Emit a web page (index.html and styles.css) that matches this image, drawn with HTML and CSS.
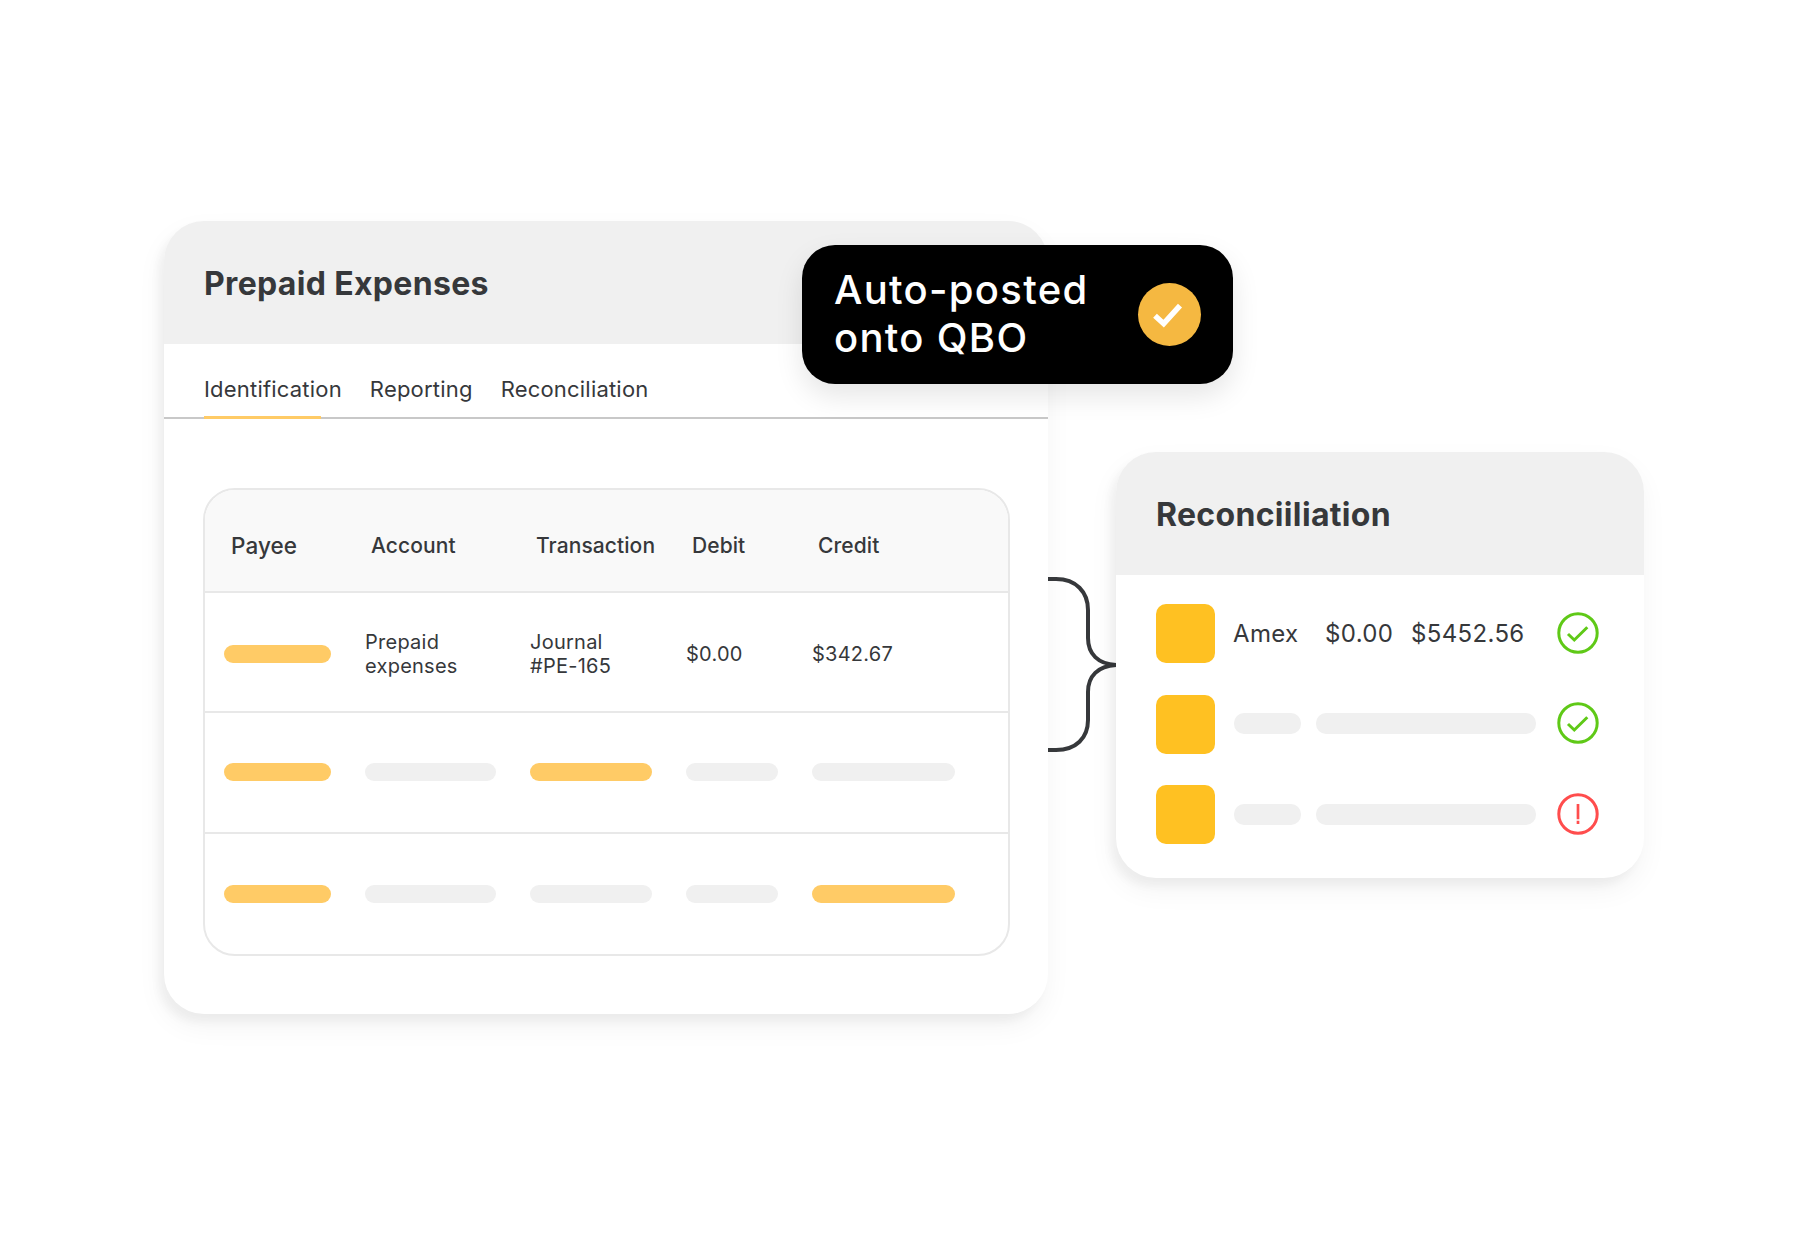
FILE: index.html
```html
<!DOCTYPE html>
<html>

    <head>
        <link rel="stylesheet" href="styles.css">
    </head>

    <body>
        <div class="canvas">
            <div class="card main-card">
                <div class="card-head"><h2>Prepaid Expenses</h2></div>
                <div class="tabs">
                    <span class="tab active">Identification</span>
                    <span class="tab">Reporting</span>
                    <span class="tab">Reconciliation</span>
                </div>
                <div class="table-wrap">
                    <div class="table">
                        <div class="row head-row">
                            <span class="first">Payee</span>
                            <span>Account</span>
                            <span>Transaction</span>
                            <span>Debit</span>
                            <span>Credit</span>
                        </div>
                        <div class="row row-one">
                            <i class="bar w-payee orange"></i>
                            <span>Prepaid<br>expenses</span>
                            <span>Journal<br>#PE-165</span>
                            <span>$0.00</span>
                            <span>$342.67</span>
                        </div>
                        <div class="row row-two">
                            <i class="bar w-payee orange"></i>
                            <i class="bar w-account"></i>
                            <i class="bar w-trans orange"></i>
                            <i class="bar w-debit"></i>
                            <i class="bar w-credit"></i>
                        </div>
                        <div class="row row-three">
                            <i class="bar w-payee orange"></i>
                            <i class="bar w-account"></i>
                            <i class="bar w-trans"></i>
                            <i class="bar w-debit"></i>
                            <i class="bar w-credit orange"></i>
                        </div>
                    </div>
                </div>
            </div>

            <div class="badge">
                <div class="badge-text">Auto-posted<br>onto QBO</div>
                <div class="badge-check">
                    <svg width="63" height="63" viewBox="0 0 63 63"><path d="M17 32.700 L25.700 40.700 L42 22.700" fill="none" stroke="#fff" stroke-width="5.500"/></svg>
                </div>
            </div>

            <svg class="brace" width="70" height="190" viewBox="0 0 70 190">
                <path d="M0 9 H8 C28 9 40 22 40 40 V68 C40 84 50 94 68 95 C50 96 40 106 40 122 V150 C40 168 28 180 8 180 H0" fill="none" stroke="#36383b" stroke-width="4"/>
            </svg>

            <div class="card side-card">
                <div class="card-head"><h2>Reconciiliation</h2></div>
                <div class="side-rows">
                    <div class="side-row">
                        <div class="square"></div>
                        <div class="side-body">
                            <span class="t-name">Amex</span>
                            <span class="t-low">$0.00</span>
                            <span class="t-high">$5452.56</span>
                        </div>
                        <svg class="status" width="42" height="42" viewBox="0 0 42 42">
                            <circle cx="21" cy="21" r="19.200" fill="none" stroke="#5fc917" stroke-width="3"/>
                            <path d="M11 22 L17.300 28 L30.300 15.300" fill="none" stroke="#5fc917" stroke-width="3"/>
                        </svg>
                    </div>
                    <div class="side-row">
                        <div class="square"></div>
                        <div class="side-body lift">
                            <i class="bar short"></i>
                            <i class="bar long"></i>
                        </div>
                        <svg class="status" width="42" height="42" viewBox="0 0 42 42">
                            <circle cx="21" cy="21" r="19.200" fill="none" stroke="#5fc917" stroke-width="3"/>
                            <path d="M11 22 L17.300 28 L30.300 15.300" fill="none" stroke="#5fc917" stroke-width="3"/>
                        </svg>
                    </div>
                    <div class="side-row">
                        <div class="square"></div>
                        <div class="side-body">
                            <i class="bar short"></i>
                            <i class="bar long"></i>
                        </div>
                        <svg class="status" width="42" height="42" viewBox="0 0 42 42">
                            <circle cx="21" cy="21" r="19.200" fill="none" stroke="#ff4d4d" stroke-width="3"/>
                            <path d="M21 11 V26.300 M21 27.700 V31" fill="none" stroke="#ff4d4d" stroke-width="2.700"/>
                        </svg>
                    </div>
                </div>
            </div>
        </div>
    </body>

</html>
```

FILE: styles.css
```css
body {
    margin: 0;
    background: #fff;
    font-family: Inter, "Liberation Sans", sans-serif;
    color: #36383b;
}
.canvas {
    position: relative;
    width: 1807px;
    height: 1234px;
    overflow: hidden;
}
.card {
    position: absolute;
    background: #fff;
    overflow: hidden;
    border-radius: 40px;
    box-shadow: -6px 8px 8px rgba(0, 0, 0, 0.04), -2px 12px 28px rgba(0, 0, 0, 0.05);
}
.main-card {
    left: 164px;
    top: 221px;
    width: 884px;
    height: 793px;
}
.side-card {
    left: 1116px;
    top: 452px;
    width: 528px;
    height: 426px;
}
.card-head {
    height: 123px;
    background: #f0f0f0;
    padding: 43px 0 0 40px;
    box-sizing: border-box;
}
.card-head h2 {
    margin: 0;
    font-size: 32px;
    line-height: 40px;
    font-weight: 700;
    letter-spacing: 0.33px;
}
.tabs {
    position: relative;
    display: flex;
    gap: 28px;
    height: 75px;
    box-sizing: border-box;
    padding: 29px 0 0 40px;
    border-bottom: 2px solid #c8c8c8;
    font-size: 22px;
    line-height: 32px;
    letter-spacing: 0.2px;
}
.tab.active::after {
    content: "";
    position: absolute;
    left: 40px;
    bottom: -2px;
    width: 117px;
    height: 3px;
    background: #ffcb66;
}
.table-wrap {
    padding: 69px 0 0 39px;
}
.table {
    width: 807px;
    height: 468px;
    box-sizing: border-box;
    border: 2px solid #e8e8e8;
    border-radius: 32px;
    overflow: hidden;
}
.row {
    display: grid;
    grid-template-columns: 141px 165px 156px 126px 1fr;
    align-items: center;
    box-sizing: border-box;
    padding-left: 19px;
    border-top: 2px solid #e8e8e8;
    font-size: 20px;
    line-height: 24.5px;
    letter-spacing: 0.25px;
}
.row-one {
    height: 120px;
    padding-top: 4px;
}
.row-two {
    height: 121px;
    padding-bottom: 2px;
}
.row-three {
    height: 122px;
}
.head-row {
    height: 101px;
    padding-top: 11px;
    border-top: 0;
    background: #f9f9f9;
    font-size: 21px;
    font-weight: 500;
    letter-spacing: 0.08px;
}
.head-row span {
    padding-left: 6px;
}
.head-row .first {
    padding-left: 7px;
    font-size: 22.500px;
}
.bar {
    display: block;
    height: 18px;
    border-radius: 9px;
    background: #f0f0f0;
}
.orange {
    background: #ffcb66;
}
.w-payee { width: 107px; }
.w-account { width: 131px; }
.w-trans { width: 122px; }
.w-debit { width: 92px; }
.w-credit { width: 143px; }

.badge {
    position: absolute;
    left: 802px;
    top: 245px;
    width: 431px;
    height: 139px;
    box-sizing: border-box;
    padding: 0 32px 0 32px;
    display: flex;
    align-items: center;
    justify-content: space-between;
    background: #000;
    color: #fff;
    border-radius: 33px;
    box-shadow: 0 12px 28px rgba(0, 0, 0, 0.1);
}
.badge-text {
    margin-bottom: 2px;
    font-size: 40px;
    line-height: 48px;
    font-weight: 500;
    letter-spacing: 1.300px;
}
.badge-check {
    width: 63px;
    height: 63px;
    border-radius: 50%;
    background: #f5b841;
}
.badge-check svg {
    display: block;
}
.brace {
    position: absolute;
    left: 1048px;
    top: 570px;
}
.side-rows {
    display: flex;
    flex-direction: column;
    gap: 31.500px;
    padding: 29px 0 0 40px;
}
.side-row {
    display: flex;
    align-items: center;
    height: 59px;
}
.square {
    width: 59px;
    height: 59px;
    border-radius: 10px;
    background: #ffc122;
}
.side-body {
    display: flex;
    align-items: center;
    width: 303px;
    margin: 0 20px 0 19px;
    font-size: 24px;
    letter-spacing: 0.35px;
}
.side-body.lift {
    margin-bottom: 2px;
}
.t-name {
    width: 92px;
    margin-left: -1px;
}
.t-low { width: 86px; }
.short {
    width: 67px;
    height: 21px;
    margin-right: 15px;
    border-radius: 10px;
}
.long {
    width: 220px;
    height: 21px;
    border-radius: 10px;
}
.status {
    display: block;
    margin-bottom: 2px;
}
```
